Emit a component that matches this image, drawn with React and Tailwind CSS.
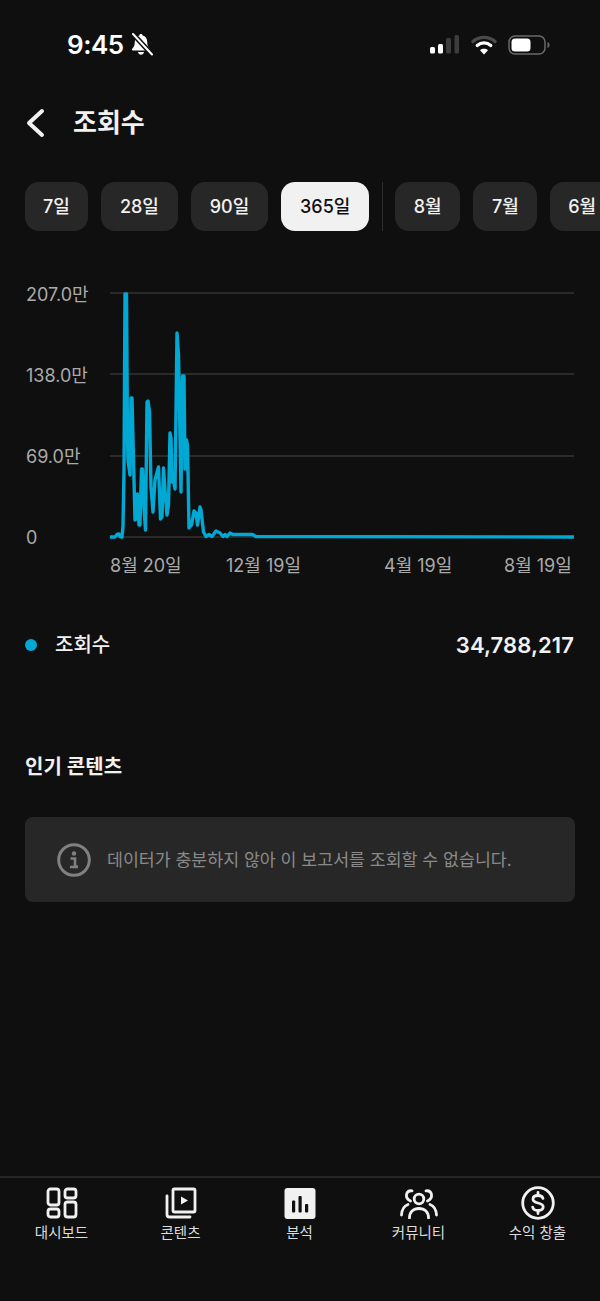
import React from 'react'

const fontStack = { fontFamily: 'Inter, "Noto Sans CJK KR", sans-serif' }

const chartPoints = [
  [110, 537], [115, 537], [117, 534.5], [119, 534], [120, 536.5], [122, 537], [123, 526], [124, 470], [125, 294],
  [126.5, 294], [127.5, 440], [128, 460], [130, 475], [131, 398], [132, 398], [133, 440], [135, 520], [136, 519],
  [137.5, 494], [139, 525], [140, 525], [141.5, 469], [142.5, 469], [143.5, 500], [145.5, 530], [147, 402], [148, 401],
  [149.5, 412], [151, 487], [153, 512], [155, 480], [158.5, 467], [160.5, 519], [162, 517], [163.5, 468], [165, 490],
  [167, 515], [168.5, 505], [170, 433], [171, 438], [172, 482], [173.5, 480], [175, 489], [177, 333], [178.5, 355],
  [181, 492], [182.5, 376], [184, 376], [185, 469], [186.5, 440], [187.5, 445], [189, 528], [191.5, 525], [194, 511],
  [196, 513], [197.5, 525], [200, 507], [201, 510], [203.5, 532], [206, 536.5], [209, 534.5], [212, 536.5], [216, 531],
  [220, 533], [223, 536.5], [225, 534.5], [227, 536.5], [230, 533], [233, 534.5], [252.5, 534.5], [256, 536.5], [574, 537],
]

const periods = [
  { label: '7일', width: 'w-[63px]' },
  { label: '28일', width: 'w-[77px]' },
  { label: '90일', width: 'w-[77.500px]' },
  { label: '365일', width: 'w-[88px]', active: true },
]

const months = [
  { label: '8월', width: 'w-[65.500px]' },
  { label: '7월', width: 'w-[64px]' },
  { label: '6월', width: 'w-[64px]' },
]

const PeriodPill = ({ label, width, active }) => (
  <div
    className={`${width} h-[49px] shrink-0 rounded-[14px] flex items-center justify-center text-[18px] font-medium ${
      active ? 'bg-[#f1f1f1] text-[#0f0f0f]' : 'bg-[#272727] text-[#f1f1f1]'
    }`}
  >
    {label}
  </div>
)

const BellSlash = () => (
  <svg width="23" height="24" viewBox="0 0 23 24">
    <path d="M10 1c.9 0 1.500.6 1.600 1.400 3 .7 4.600 3.200 4.600 6.400 0 3.800 1 5.400 2.600 7 .6.7.2 1.700-.7 1.700H1.900c-.9 0-1.300-1-.7-1.700 1.600-1.600 2.600-3.200 2.600-7 0-3.200 1.600-5.700 4.600-6.400C8.500 1.600 9.100 1 10 1z" fill="#fff" />
    <path d="M7 19h6c-.2 1.600-1.400 2.800-3 2.800S7.200 20.600 7 19z" fill="#fff" />
    <path d="M2 1l19 20.500" stroke="#0f0f0f" strokeWidth="5" />
    <path d="M2 1l19 20.500" stroke="#fff" strokeWidth="2" strokeLinecap="round" />
  </svg>
)

const StatusIcons = () => (
  <div className="flex items-center">
    <svg width="30" height="22" viewBox="-2 0 30 22" className="overflow-visible">
      <rect x="0" y="13" width="5" height="6.500" rx="1.500" fill="#fff" />
      <rect x="8" y="10" width="5" height="9.500" rx="1.500" fill="#fff" />
      <rect x="16" y="4" width="5" height="15.500" rx="1.500" fill="#3d3d3d" />
      <rect x="24.500" y="1" width="4.500" height="18.500" rx="1.500" fill="#3d3d3d" />
    </svg>
    <svg className="ml-[13px]" width="26" height="20" viewBox="0 0 26 20">
      <path d="M2 6.500C8 1 18 1 24 6.500" stroke="#4a4a4a" strokeWidth="3.400" fill="none" strokeLinecap="round" />
      <path d="M6.200 10.500c4-3.600 9.600-3.600 13.600 0" stroke="#fff" strokeWidth="3.200" fill="none" strokeLinecap="round" />
      <path d="M13 19.500l-4-4.300c2.300-1.900 5.700-1.900 8 0z" fill="#fff" />
    </svg>
    <svg className="ml-[11px]" width="42" height="22" viewBox="0 0 42 22">
      <rect x="1" y="2" width="36" height="18" rx="6" stroke="#6a6a6a" strokeWidth="1.500" fill="none" />
      <rect x="3.500" y="4.500" width="19" height="13" rx="3.500" fill="#fff" />
      <path d="M39.500 8c1.500.5 2 1.700 2 3s-.5 2.500-2 3z" fill="#6a6a6a" />
    </svg>
  </div>
)

const DashboardIcon = () => (
  <svg width="32" height="32" viewBox="0 0 32 32" fill="none" stroke="#f1f1f1" strokeWidth="2.800">
    <rect x="2" y="2" width="11" height="16" rx="2.500" />
    <rect x="19" y="2" width="11" height="9" rx="2.500" />
    <rect x="2" y="22" width="11" height="8" rx="2.500" />
    <rect x="19" y="15" width="11" height="15" rx="2.500" />
  </svg>
)

const ContentIcon = () => (
  <svg width="32" height="32" viewBox="0 0 32 32" fill="none">
    <rect x="8" y="2" width="22" height="23" rx="1.500" stroke="#f1f1f1" strokeWidth="2.800" />
    <path d="M2 9v18.500C2 29 3 30 4.500 30H25" stroke="#f1f1f1" strokeWidth="2.800" strokeLinecap="round" />
    <path d="M16 9.500l7 4-7 4z" fill="#f1f1f1" />
  </svg>
)

const AnalyticsIcon = () => (
  <svg width="32" height="32" viewBox="0 0 32 32">
    <rect x="0.500" y="1" width="31" height="31" rx="3" fill="#f1f1f1" />
    <rect x="8" y="13.500" width="3.200" height="12" rx="1" fill="#0f0f0f" />
    <rect x="14.500" y="9" width="3.200" height="16.500" rx="1" fill="#0f0f0f" />
    <rect x="21" y="17" width="3.200" height="8.500" rx="1" fill="#0f0f0f" />
  </svg>
)

const CommunityIcon = () => (
  <svg width="38" height="32" viewBox="0 0 38 32" fill="none" stroke="#f1f1f1" strokeWidth="2.800" strokeLinecap="round">
    <circle cx="19" cy="12" r="4.800" />
    <path d="M9.500 31c0-6 3.800-9.500 9.500-9.500s9.500 3.500 9.500 9.500" />
    <path d="M10.500 14C7.500 12.500 6 10.500 6.500 7.500 7 5 9 3.500 12 3.800" />
    <path d="M27.500 14c3-1.500 4.500-3.500 4-6.500C31 5 29 3.500 26 3.800" />
    <path d="M1.500 28c.3-5.500 2.500-9 6.500-10.500" />
    <path d="M36.500 28c-.3-5.500-2.500-9-6.500-10.500" />
  </svg>
)

const EarnIcon = () => (
  <svg width="34" height="34" viewBox="0 0 34 34" fill="none" stroke="#f1f1f1">
    <circle cx="17" cy="17" r="15.300" strokeWidth="2.800" />
    <path d="M22 12.500c-.5-2-2.500-3-5-3-3 0-5 1.500-5 3.700 0 5 10.200 2.600 10.200 7.600 0 2.300-2.200 3.700-5.200 3.700-2.800 0-4.800-1.200-5.300-3.300" strokeWidth="2.800" strokeLinecap="round" />
    <path d="M17 6.500v3M17 24.500v3" strokeWidth="2.800" strokeLinecap="round" />
  </svg>
)

const navItems = [
  { label: '대시보드', Icon: DashboardIcon },
  { label: '콘텐츠', Icon: ContentIcon },
  { label: '분석', Icon: AnalyticsIcon },
  { label: '커뮤니티', Icon: CommunityIcon },
  { label: '수익 창출', Icon: EarnIcon },
]

const App = () => {
  return (
    <div className="w-[600px] h-[1301px] bg-[#0f0f0f] text-[#f1f1f1] flex flex-col overflow-hidden" style={fontStack}>
      {/* status bar */}
      <div className="h-[90px] shrink-0 pl-[67px] pr-[50px] flex items-center justify-between">
        <div className="flex items-center gap-[7px]">
          <span className="text-[26px] leading-none font-semibold tracking-[-0.5px] text-white">9:45</span>
          <BellSlash />
        </div>
        <StatusIcons />
      </div>

      {/* header */}
      <div className="h-[66px] shrink-0 pl-[25px] flex items-center gap-[26px]">
        <svg width="22" height="30" viewBox="0 0 22 30" fill="none">
          <path d="M17 3L4 15l13 12" stroke="#f1f1f1" strokeWidth="4" strokeLinecap="round" strokeLinejoin="round" />
        </svg>
        <h1 className="text-[26px] leading-none font-semibold">조회수</h1>
      </div>

      {/* period filter */}
      <div className="mt-[26px] pl-[25px] flex items-stretch gap-[12.900px] shrink-0">
        {periods.map((p) => (
          <PeriodPill key={p.label} {...p} />
        ))}
        <div className="w-px -mr-[1px] bg-[#2e2e2e] shrink-0" />
        {months.map((m) => (
          <PeriodPill key={m.label} {...m} />
        ))}
      </div>

      {/* chart */}
      <div className="mt-[62px] pl-[26px] flex shrink-0">
        <div className="mt-[1px] w-[84px] h-[244px] flex flex-col justify-between text-[18px] text-[#aaaaaa]">
          {['207.0만', '138.0만', '69.0만', '0'].map((v) => (
            <div key={v} className="h-0 flex items-center whitespace-nowrap">{v}</div>
          ))}
        </div>
        <svg width="464" height="244" viewBox="110 293 464 244" className="overflow-visible">
          {[293, 374, 456, 537].map((y) => (
            <line key={y} x1="110" x2="574" y1={y} y2={y} stroke="#2a2a2a" strokeWidth="2" />
          ))}
          <polyline
            points={chartPoints.map((p) => p.join(',')).join(' ')}
            fill="none"
            stroke="#02a8d4"
            strokeWidth="3.400"
            strokeLinejoin="round"
          />
        </svg>
      </div>
      <div className="mt-[15px] pl-[110px] flex text-[18px] leading-[26px] text-[#aaaaaa] shrink-0">
        <span className="w-[116px]">8월 20일</span>
        <span className="w-[158px]">12월 19일</span>
        <span className="w-[120px]">4월 19일</span>
        <span>8월 19일</span>
      </div>

      {/* legend */}
      <div className="mt-[51px] px-[25px] pr-[26px] flex items-center shrink-0">
        <div className="w-[12px] h-[12px] rounded-full bg-[#02a8d4]" />
        <span className="ml-[18px] text-[20px] leading-[30px] font-medium">조회수</span>
        <span className="ml-auto text-[22px] leading-[30px] font-semibold tracking-[0.1px]">34,788,217</span>
      </div>

      {/* top content */}
      <h2 className="mt-[92px] pl-[25px] text-[20px] leading-[30px] font-semibold shrink-0">인기 콘텐츠</h2>
      <div className="mt-[35px] mx-[25px] h-[85px] rounded-[8px] bg-[#272727] pl-[32px] flex items-center gap-[16px] shrink-0">
        <svg width="34" height="34" viewBox="0 0 34 34" fill="none">
          <circle cx="17" cy="17" r="15.300" stroke="#808080" strokeWidth="3" />
          <circle cx="17" cy="10.500" r="2.200" fill="#808080" />
          <path d="M13.500 15.500h4.500v8h2.500M13 24h8" stroke="#808080" strokeWidth="2.600" />
        </svg>
        <span className="text-[17.300px] text-[#8a8a8a]">데이터가 충분하지 않아 이 보고서를 조회할 수 없습니다.</span>
      </div>

      {/* bottom nav */}
      <div className="mt-auto h-[125px] shrink-0 border-t-2 border-[#272727] grid grid-cols-5 pt-[7px] pl-[2px] pr-[3px]">
        {navItems.map(({ label, Icon }) => (
          <div key={label} className="flex flex-col items-center">
            <div className="h-[36px] flex items-center justify-center">
              <Icon />
            </div>
            <span className="mt-[1px] text-[14.500px] leading-[22px] text-[#dddddd]">{label}</span>
          </div>
        ))}
      </div>
    </div>
  )
}

export default App
